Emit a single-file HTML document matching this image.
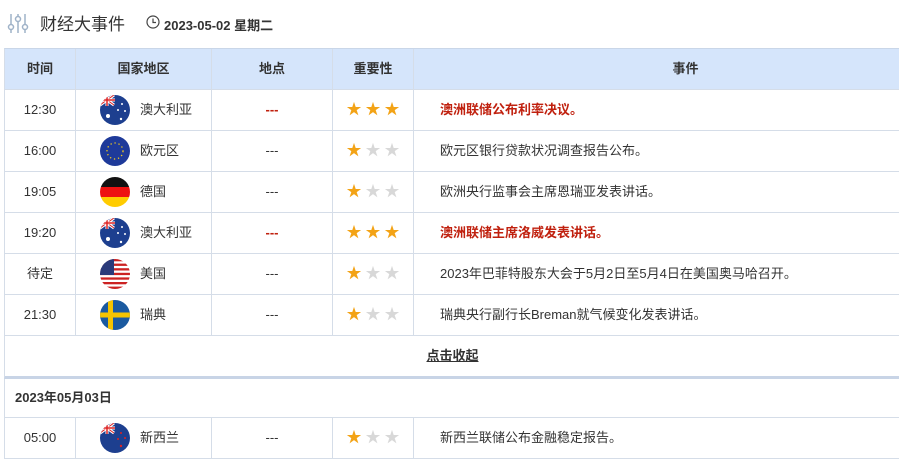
<!DOCTYPE html>
<html><head><meta charset="utf-8"><style>
body{margin:0;width:899px;height:464px;overflow:hidden;background:#fff;font-family:"Liberation Sans","Noto Sans CJK SC",sans-serif;color:#333;font-size:13px}
.a{position:absolute}
.row{position:absolute;left:4px;width:960px;height:40px;border-bottom:1px solid #d5dde8;border-left:1px solid #d5dde8}
.c{position:absolute;top:0;height:40px;line-height:40px;text-align:center;border-right:1px solid #d5dde8;box-sizing:border-box}
.c1{left:0;width:71px}.c2{left:71px;width:136px}.c3{left:207px;width:121px}.c4{left:328px;width:81px}.c5{left:409px;width:551px;text-align:left;padding-left:26px;border-right:none}
.hd{background:#d5e5fb;top:48px;border-top:1px solid #c9d6e8}
.hd .c{font-weight:bold;color:#333}
.hd .c5{text-align:center;padding:0 8px 0 0}
.flag{position:absolute;left:24px;top:5px;width:30px;height:30px;border-radius:50%;overflow:hidden}
.cn{position:absolute;left:64px;top:0}
.red{color:#c0200e;font-weight:bold}
.st{font-size:15px;letter-spacing:4px;padding-left:4px}
.y{color:#f3a316}.g{color:#d8d8d8}
</style></head><body>
<svg class="a" style="left:7px;top:12px" width="22" height="22" viewBox="0 0 22 22" fill="none" stroke="#9fb2c8" stroke-width="1.5"><line x1="4" y1="2" x2="4" y2="12"/><circle cx="4" cy="15" r="2.5"/><line x1="4" y1="18" x2="4" y2="21"/><line x1="11" y1="2" x2="11" y2="4"/><circle cx="11" cy="7" r="2.5"/><line x1="11" y1="10" x2="11" y2="21"/><line x1="18" y1="2" x2="18" y2="12"/><circle cx="18" cy="15" r="2.5"/><line x1="18" y1="18" x2="18" y2="21"/></svg>
<div class="a" style="left:40px;top:10px;font-size:17px;color:#333">财经大事件</div>
<svg class="a" style="left:146px;top:15px" width="14" height="14" viewBox="0 0 14 14" fill="none" stroke="#444" stroke-width="1.2"><circle cx="7" cy="7" r="6"/><path d="M7 3.5V7.5H10"/></svg>
<div class="a" style="left:164px;top:15px;font-size:13px;font-weight:bold;color:#333">2023-05-02 星期二</div>

<div class="row hd"><div class="c c1">时间</div><div class="c c2">国家地区</div><div class="c c3">地点</div><div class="c c4">重要性</div><div class="c c5">事件</div></div>

<div class="row" style="top:90px"><div class="c c1">12:30</div><div class="c c2"><svg class="flag" viewBox="0 0 30 30"><rect width="30" height="30" fill="#1d3f8f"/><path d="M0 0L14 10M14 0L0 10" stroke="#fff" stroke-width="3"/><path d="M0 0L14 10M14 0L0 10" stroke="#d22" stroke-width="1"/><path d="M7 0V11M0 5H15" stroke="#fff" stroke-width="3"/><path d="M7 0V11M0 5H15" stroke="#d22" stroke-width="1.5"/><circle cx="8" cy="21" r="2" fill="#fff"/><circle cx="22" cy="9" r="1" fill="#fff"/><circle cx="25" cy="16" r="1" fill="#fff"/><circle cx="21" cy="24" r="1.2" fill="#fff"/><circle cx="18" cy="15" r="1" fill="#fff"/></svg><span class="cn">澳大利亚</span></div><div class="c c3 red">---</div><div class="c c4 st"><span class="y">★★★</span></div><div class="c c5 red">澳洲联储公布利率决议。</div></div>

<div class="row" style="top:131px"><div class="c c1">16:00</div><div class="c c2"><svg class="flag" viewBox="0 0 30 30"><rect width="30" height="30" fill="#1e3a9a"/><circle cx="15" cy="15" r="8" fill="none" stroke="#f4cc1c" stroke-width="1.3" stroke-dasharray="1.3 2.8"/></svg><span class="cn">欧元区</span></div><div class="c c3">---</div><div class="c c4 st"><span class="y">★</span><span class="g">★★</span></div><div class="c c5">欧元区银行贷款状况调查报告公布。</div></div>

<div class="row" style="top:172px"><div class="c c1">19:05</div><div class="c c2"><svg class="flag" viewBox="0 0 30 30"><rect width="30" height="10" fill="#111"/><rect y="10" width="30" height="10" fill="#e11"/><rect y="20" width="30" height="10" fill="#fc0"/></svg><span class="cn">德国</span></div><div class="c c3">---</div><div class="c c4 st"><span class="y">★</span><span class="g">★★</span></div><div class="c c5">欧洲央行监事会主席恩瑞亚发表讲话。</div></div>

<div class="row" style="top:213px"><div class="c c1">19:20</div><div class="c c2"><svg class="flag" viewBox="0 0 30 30"><rect width="30" height="30" fill="#1d3f8f"/><path d="M0 0L14 10M14 0L0 10" stroke="#fff" stroke-width="3"/><path d="M0 0L14 10M14 0L0 10" stroke="#d22" stroke-width="1"/><path d="M7 0V11M0 5H15" stroke="#fff" stroke-width="3"/><path d="M7 0V11M0 5H15" stroke="#d22" stroke-width="1.5"/><circle cx="8" cy="21" r="2" fill="#fff"/><circle cx="22" cy="9" r="1" fill="#fff"/><circle cx="25" cy="16" r="1" fill="#fff"/><circle cx="21" cy="24" r="1.2" fill="#fff"/><circle cx="18" cy="15" r="1" fill="#fff"/></svg><span class="cn">澳大利亚</span></div><div class="c c3 red">---</div><div class="c c4 st"><span class="y">★★★</span></div><div class="c c5 red">澳洲联储主席洛威发表讲话。</div></div>

<div class="row" style="top:254px"><div class="c c1">待定</div><div class="c c2"><svg class="flag" viewBox="0 0 30 30"><rect width="30" height="30" fill="#fff"/><g fill="#c22"><rect y="0" width="30" height="2.3"/><rect y="4.6" width="30" height="2.3"/><rect y="9.2" width="30" height="2.3"/><rect y="13.8" width="30" height="2.3"/><rect y="18.4" width="30" height="2.3"/><rect y="23" width="30" height="2.3"/><rect y="27.6" width="30" height="2.4"/></g><rect width="14" height="16" fill="#2a3a7a"/></svg><span class="cn">美国</span></div><div class="c c3">---</div><div class="c c4 st"><span class="y">★</span><span class="g">★★</span></div><div class="c c5">2023年巴菲特股东大会于5月2日至5月4日在美国奥马哈召开。</div></div>

<div class="row" style="top:295px"><div class="c c1">21:30</div><div class="c c2"><svg class="flag" viewBox="0 0 30 30"><rect width="30" height="30" fill="#1b5aa0"/><rect x="8" width="5" height="30" fill="#f5c400"/><rect y="12.5" width="30" height="5" fill="#f5c400"/></svg><span class="cn">瑞典</span></div><div class="c c3">---</div><div class="c c4 st"><span class="y">★</span><span class="g">★★</span></div><div class="c c5">瑞典央行副行长Breman就气候变化发表讲话。</div></div>

<div class="row" style="top:336px;border-bottom:3px solid #c8d4e6"><div class="a" style="left:0;width:895px;text-align:center;line-height:40px;font-weight:bold;text-decoration:underline;color:#333">点击收起</div></div>

<div class="row" style="top:379px;height:38px"><div class="a" style="left:10px;line-height:38px;font-weight:bold">2023年05月03日</div></div>

<div class="row" style="top:418px"><div class="c c1">05:00</div><div class="c c2"><svg class="flag" viewBox="0 0 30 30"><rect width="30" height="30" fill="#1d3f8f"/><path d="M0 0L14 10M14 0L0 10" stroke="#fff" stroke-width="3"/><path d="M0 0L14 10M14 0L0 10" stroke="#d22" stroke-width="1"/><path d="M7 0V11M0 5H15" stroke="#fff" stroke-width="3"/><path d="M7 0V11M0 5H15" stroke="#d22" stroke-width="1.5"/><circle cx="21" cy="10" r="1" fill="#d22"/><circle cx="25" cy="15" r="1" fill="#d22"/><circle cx="18" cy="16" r="1" fill="#d22"/><circle cx="21" cy="23" r="1.2" fill="#d22"/></svg><span class="cn">新西兰</span></div><div class="c c3">---</div><div class="c c4 st"><span class="y">★</span><span class="g">★★</span></div><div class="c c5">新西兰联储公布金融稳定报告。</div></div>
</body></html>
